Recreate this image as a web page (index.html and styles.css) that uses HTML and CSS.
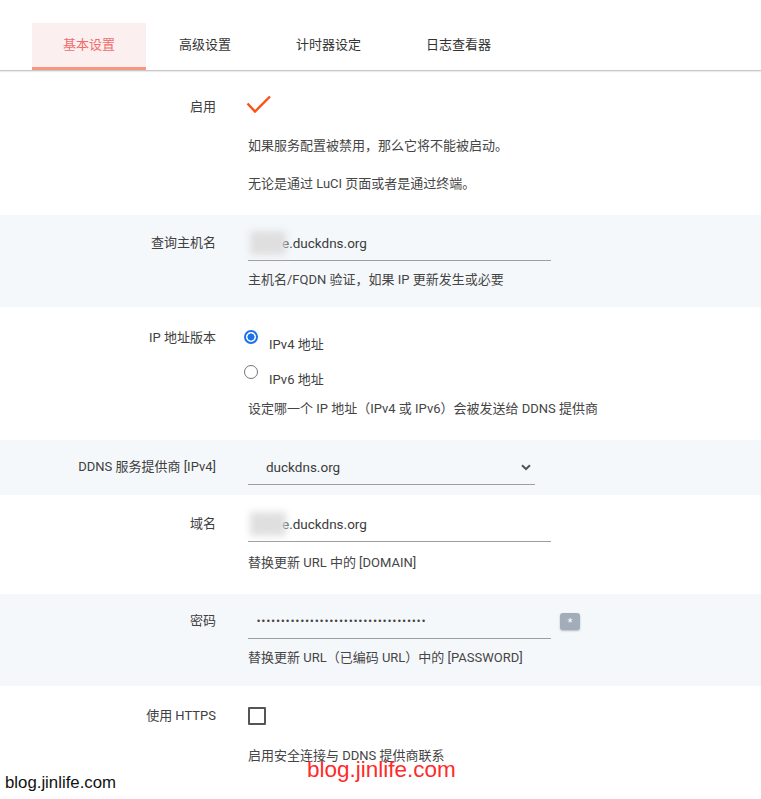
FILE: index.html
```html
<!DOCTYPE html>
<html lang="zh-CN">
<head>
<meta charset="utf-8">
<title>DDNS 基本设置</title>
<link rel="stylesheet" href="styles.css">
</head>
<body>
<div class="page">
  <nav class="tabs">
    <div class="tab active">基本设置</div>
    <div class="tab">高级设置</div>
    <div class="tab">计时器设定</div>
    <div class="tab">日志查看器</div>
  </nav>

  <div class="row row-enable">
    <div class="label lbl-enable">启用</div>
    <div class="field">
      <div class="check-wrap">
        <svg class="checkmark" width="26" height="20" viewBox="0 0 26 20"><path d="M1.5 8.5 L9 16.5 L24 1.5" fill="none" stroke="#fb4f14" stroke-width="2.4"/></svg>
      </div>
      <div class="desc d1">如果服务配置被禁用，那么它将不能被启动。</div>
      <div class="desc d2">无论是通过 LuCI 页面或者是通过终端。</div>
    </div>
  </div>

  <div class="row shaded row-input">
    <div class="label lbl-input">查询主机名</div>
    <div class="field">
      <div class="input"><span class="val">e.duckdns.org</span><span class="blur"></span></div>
      <div class="desc dsm">主机名/FQDN 验证，如果 IP 更新发生或必要</div>
    </div>
  </div>

  <div class="row row-radio">
    <div class="label">IP 地址版本</div>
    <div class="field">
      <div class="option first"><span class="radio on"></span><span class="opt-text">IPv4 地址</span></div>
      <div class="option"><span class="radio"></span><span class="opt-text">IPv6 地址</span></div>
      <div class="desc dsm">设定哪一个 IP 地址（IPv4 或 IPv6）会被发送给 DDNS 提供商</div>
    </div>
  </div>

  <div class="row shaded row-select">
    <div class="label lbl-select">DDNS 服务提供商 [IPv4]</div>
    <div class="field">
      <div class="select"><span>duckdns.org</span>
        <svg class="chev" width="10" height="7" viewBox="0 0 10 7"><path d="M1 1.2 L5 5 L9 1.2" fill="none" stroke="#555" stroke-width="2"/></svg>
      </div>
    </div>
  </div>

  <div class="row row-domain">
    <div class="label lbl-input">域名</div>
    <div class="field">
      <div class="input"><span class="val">e.duckdns.org</span><span class="blur"></span></div>
      <div class="desc dsm dom-desc">替换更新 URL 中的 [DOMAIN]</div>
    </div>
  </div>

  <div class="row shaded row-pass">
    <div class="label lbl-input">密码</div>
    <div class="field">
      <div class="pass-line">
        <div class="input pass"><span class="dots">•••••••••••••••••••••••••••••••••••</span></div>
        <button class="reveal" type="button">*</button>
      </div>
      <div class="desc dsm">替换更新 URL（已编码 URL）中的 [PASSWORD]</div>
    </div>
  </div>

  <div class="row row-https">
    <div class="label">使用 HTTPS</div>
    <div class="field">
      <span class="checkbox"></span>
      <div class="desc dhttps">启用安全连接与 DDNS 提供商联系</div>
    </div>
  </div>

  <div class="wm-red">blog.jinlife.com</div>
  <div class="wm-black">blog.jinlife.com</div>
</div>
</body>
</html>
```

FILE: styles.css
```css
* { box-sizing: border-box; }
html, body { margin: 0; padding: 0; background: #fff; }
body {
  font-family: Roboto, "Noto Sans CJK SC", "Noto Sans", sans-serif;
  font-size: 13px;
  line-height: 20px;
  color: #404040;
}
.page { position: relative; width: 761px; height: 799px; overflow: hidden; }

/* tabs */
.tabs {
  display: flex;
  padding: 23px 0 0 32px;
  border-bottom: 1px solid #c9c9c9;
  box-shadow: 0 1px 1px rgba(0,0,0,0.08);
}
.tab {
  padding: 12px 32px 12px 33px;
  border-bottom: 3px solid transparent;
  color: #333;
  white-space: nowrap;
}
.tab.active {
  background: #fcefef;
  color: #f06c6c;
  border-bottom-color: #f8967f;
  padding: 12px 31px 12px 31px;
}

/* rows */
.row {
  display: grid;
  grid-template-columns: 216px 1fr;
  column-gap: 32px;
}
.row.shaded { background: #f5f8fb; }
.label { text-align: right; white-space: nowrap; }
.field { display: flex; flex-direction: column; align-items: flex-start; }
.desc { white-space: nowrap; color: #454545; }

.row-enable { padding: 24px 0 21px; }
.lbl-enable { padding-top: 2px; }
.check-wrap { height: 20px; margin-left: -2px; }
.checkmark { display: block; }
.d1 { margin-top: 21px; }
.d2 { margin-top: 18px; }

.row-input { padding: 10px 0 17px; }
.lbl-input { padding-top: 8px; }
.input {
  position: relative;
  width: 303px;
  height: 36px;
  border-bottom: 1px solid #9e9e9e;
  display: flex;
  align-items: center;
  padding-left: 34px;
  color: #3c3c3c;
  font-size: 13.5px;
}
/* blurred privacy patch laid over the start of the value */
.blur {
  position: absolute;
  left: 2px;
  top: 6px;
  width: 36px;
  height: 24px;
  background: #dedede;
  filter: blur(3.5px);
  opacity: 0.95;
}
.dsm { margin-top: 9px; }

.row-radio { padding: 21px 0 21px; }
.option { display: flex; align-items: flex-start; margin-top: 10px; }
.option.first { margin-top: 2px; }
.radio {
  width: 14px; height: 14px;
  border-radius: 50%;
  border: 1px solid #757575;
  margin-left: -4px;
  margin-right: 11px;
  background: #fff;
  flex: none;
}
.radio.on {
  border: 2px solid #1a73e8;
  background: radial-gradient(circle, #1a73e8 0 3.3px, #fff 3.8px);
}
.opt-text { padding-top: 5px; }

.row-select { padding: 10px 0 10px; }
.lbl-select { padding-top: 7px; }
.select {
  width: 287px;
  height: 35px;
  border-bottom: 1px solid #9e9e9e;
  display: flex;
  align-items: center;
  justify-content: space-between;
  padding: 0 4px 0 18px;
  color: #3c3c3c;
  font-size: 13.5px;
}
.chev { display: block; }

.row-domain { padding: 11px 0 21px; }
.dom-desc { margin-top: 11px; }

.row-pass { padding: 9px 0 18px; }
.pass-line { display: flex; align-items: center; gap: 9px; }
.input.pass { padding-left: 9px; }
.dots {
  font-family: "Liberation Sans", sans-serif;
  font-size: 9px;
  letter-spacing: 1.7px;
  color: #444;
}
.reveal {
  width: 20px; height: 17px;
  padding: 0;
  border: none;
  border-radius: 3px;
  background: #a3acb9;
  color: #fff;
  font-size: 13px;
  line-height: 19px;
  box-shadow: 0 1px 2px rgba(0,0,0,0.25);
  font-family: "Liberation Sans", sans-serif;
}

.row-https { padding: 20px 0 30px; }
.checkbox {
  display: block;
  width: 18px; height: 18px;
  border: 2px solid #555;
  border-radius: 1px;
  margin-top: 1px;
}
.dhttps { margin-top: 21px; }

/* watermarks overlaid on top of the page */
.wm-red {
  position: absolute;
  left: 307px;
  top: 757px;
  font-family: "Liberation Sans", sans-serif;
  font-size: 22.5px;
  line-height: 26px;
  color: #ff2b2b;
}
.wm-black {
  position: absolute;
  left: 5px;
  top: 773px;
  font-family: "Liberation Sans", sans-serif;
  font-size: 16.8px;
  line-height: 20px;
  color: #111;
}
```
